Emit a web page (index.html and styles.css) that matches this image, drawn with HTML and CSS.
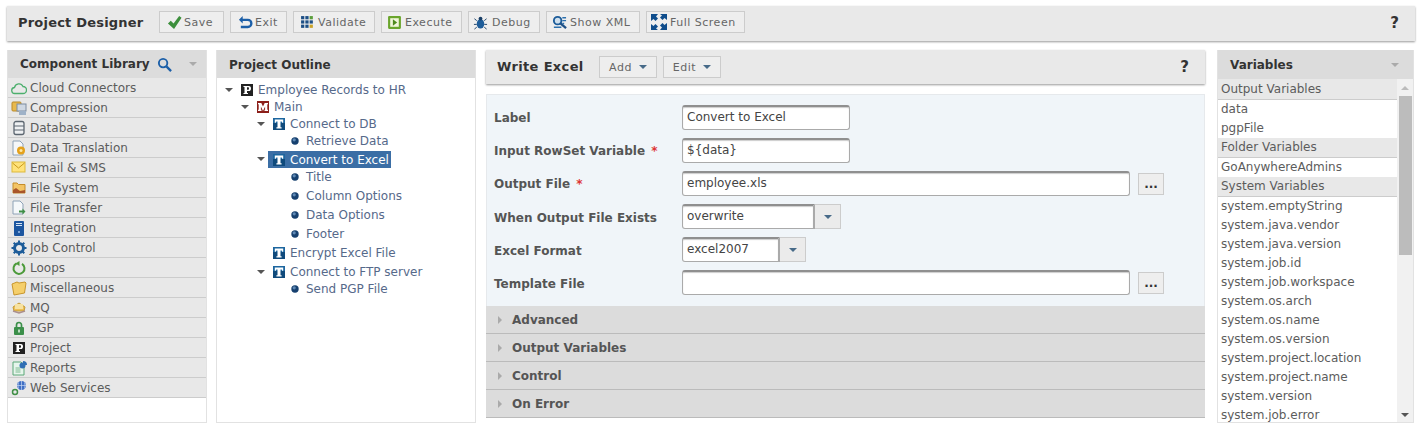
FILE: index.html
```html
<!DOCTYPE html>
<html lang="en">
<head>
<meta charset="utf-8">
<title>Project Designer</title>
<link rel="stylesheet" href="styles.css">
</head>
<body>
<svg class="defs" width="0" height="0">
  <defs>
    <symbol id="i-t" viewBox="0 0 12 12"><rect width="12" height="12" fill="#0f4a7c"/><rect width="12" height="5" fill="#1d669f"/><path d="M1.800 1.500h8.400v3.200H9.200l-.5-1.200H7.500v5.700h1.100v1.300H3.400V9.200h1.100V3.500H3.300l-.5 1.200h-1z" fill="#fff"/></symbol>
    <symbol id="i-m" viewBox="0 0 12 12"><rect width="12" height="12" fill="#8c1f1a"/><path d="M1 2h3.300L6 5.500 7.700 2H11v1.200h-.7v5.600h.7V10H7.500V8.800h.6V5.500L6 10 3.900 5.500v3.300h.6V10H1V8.800h.7V3.200H1z" fill="#fff"/></symbol>
    <symbol id="i-p" viewBox="0 0 12 12"><rect width="12" height="12" fill="#222"/><path d="M2.500 2h5.300C9.500 2 10 3 10 4.400S9.400 7 7.800 7H6v2h1v1H2.500V9H3.500V3H2.500zM6 3.200v2.600h1c.7 0 1-.5 1-1.300s-.3-1.300-1-1.300z" fill="#fff"/></symbol>
    <symbol id="i-dot" viewBox="0 0 8 8"><circle cx="4" cy="4" r="3.700" fill="#16406f"/><circle cx="3.200" cy="2.800" r="1.600" fill="#5f89b5"/></symbol>
  </defs>
</svg>

<header class="topbar">
  <h1 class="title">Project Designer</h1>
  <nav class="tools">
    <button class="tool tool-save"><svg class="ti" viewBox="0 0 16 16"><path d="M1 9l3-3 3 3 6-8 2.500 2L7.500 15z" fill="#3c8f3c"/></svg>Save</button>
    <button class="tool tool-exit"><svg class="ti" viewBox="0 0 16 16"><path d="M5 1L1 5l4 4V6.500h5.500a2.500 2.500 0 010 5H3V14h7.500a5 5 0 000-10H5z" fill="#1c5fa8"/></svg>Exit</button>
    <button class="tool tool-validate"><svg class="ti" viewBox="0 0 14 14"><g fill="#1d4f85"><rect x="1" y="1" width="3" height="3"/><rect x="5" y="1" width="3" height="3"/><rect x="1" y="5" width="3" height="3"/><rect x="5" y="5" width="3" height="3"/><rect x="1" y="9" width="3" height="3"/><rect x="5" y="9" width="3" height="3"/><rect x="9" y="5" width="3" height="3"/></g><rect x="9" y="1" width="3" height="3" fill="#5a9e3c"/><rect x="9" y="9" width="3" height="3" fill="#c9a227"/></svg>Validate</button>
    <button class="tool tool-exec"><svg class="ti" viewBox="0 0 14 14"><rect x="1" y="1" width="12" height="12" rx="1" fill="#6aa52c"/><rect x="3" y="3" width="8" height="8" fill="#f1f6dc"/><path d="M5.500 4l4 3-4 3z" fill="#4e8a1d"/></svg>Execute</button>
    <button class="tool tool-debug"><svg class="ti" viewBox="0 0 16 16"><ellipse cx="8" cy="9.500" rx="4" ry="5" fill="#1d5c99"/><circle cx="8" cy="3.800" r="2" fill="#183e66"/><path d="M4 6L1.500 4M4 10H1M4 13l-2.500 2M12 6l2.500-2M12 10h3M12 13l2.500 2" stroke="#183e66" fill="none"/></svg>Debug</button>
    <button class="tool tool-xml"><svg class="ti" viewBox="0 0 16 16"><circle cx="6" cy="6" r="4" fill="#cfe0ee" stroke="#1d5c99" stroke-width="2"/><path d="M9 9l6 5" stroke="#1d4f85" stroke-width="2.500"/><path d="M11 3h4M11 6h4M11 9h2M2 13h8" stroke="#2d70ad" stroke-width="1.500"/></svg>Show XML</button>
    <button class="tool tool-full"><svg class="ti ti-l" viewBox="0 0 18 18"><g fill="#0f4d8c"><path d="M1 1h7L6 3.500 8 5.500 5.500 8 3.500 6 1 8z"/><path d="M17 1v6l-2.500-2L12.500 7 10 4.500 12 2.500 10 1z"/><path d="M1 17v-6l2.500 2 2-2L8 13.500 6 15.500 8 17z"/><path d="M17 17h-7l2-2.500-2-2L12.500 10l2 2 2.500-2z"/></g></svg>Full Screen</button>
  </nav>
  <span class="help">?</span>
</header>

<main class="columns">
  <section class="panel library">
    <div class="panel-head">
      <h2 class="panel-title">Component Library</h2>
      <svg class="search" viewBox="0 0 16 16"><circle cx="6.500" cy="6.500" r="4.500" fill="none" stroke="#1c5fa8" stroke-width="2"/><path d="M10 10l5 5" stroke="#1c5fa8" stroke-width="2.500"/></svg>
      <span class="caret caret-head"></span>
    </div>
    <ul class="lib-list">
      <li class="lib-item"><svg class="li" viewBox="0 0 16 16"><path d="M4 13.500a3 3 0 01-.5-6A4.500 4.500 0 0112 6.500a3.500 3.500 0 010 7z" fill="none" stroke="#4caf6d" stroke-width="1.300"/></svg>Cloud Connectors</li>
      <li class="lib-item"><svg class="li" viewBox="0 0 16 16"><rect x="1" y="2" width="9" height="9" rx="1" fill="#e8b94e" stroke="#b98a2a"/><rect x="6" y="4" width="9" height="7" fill="#cfd8e3" stroke="#7c8ca0"/><rect x="8" y="11" width="7" height="4" fill="#9fb2c8"/></svg>Compression</li>
      <li class="lib-item"><svg class="li" viewBox="0 0 16 16"><rect x="3" y="1.500" width="10" height="13" rx="2" fill="#eef0f2" stroke="#5c6670" stroke-width="1.300"/><path d="M3 6h10M3 10h10" stroke="#5c6670"/></svg>Database</li>
      <li class="lib-item"><svg class="li" viewBox="0 0 16 16"><path d="M2 1h7l3 3v11H2z" fill="#f5f7f9" stroke="#8ea2b6"/><circle cx="10" cy="10.500" r="4" fill="#e4a11b"/><circle cx="10" cy="10.500" r="1.500" fill="#fbe7a8"/></svg>Data Translation</li>
      <li class="lib-item"><svg class="li" viewBox="0 0 16 16"><rect x="1" y="2" width="13" height="10" fill="#ffe27a" stroke="#dcb93c"/><path d="M1.500 3L7.500 8l6-5" fill="none" stroke="#c99a1d"/></svg>Email &amp; SMS</li>
      <li class="lib-item"><svg class="li" viewBox="0 0 16 16"><path d="M2 3h4l1.500 1.500H14V13H2z" fill="#f3c465" stroke="#c48c2b"/><path d="M2 10l3-2 4 3 5-1v3H2z" fill="#a9552a"/></svg>File System</li>
      <li class="lib-item"><svg class="li" viewBox="0 0 16 16"><path d="M2 1h7l3 3v10H2z" fill="#f5f8fa" stroke="#8ea2b6"/><path d="M8 10.500h3.500V8.500l3 3-3 3v-2H8z" fill="#3f8f46"/></svg>File Transfer</li>
      <li class="lib-item"><svg class="li" viewBox="0 0 16 16"><rect x="3" y="1" width="10" height="15" rx="1" fill="#1c56a0"/><path d="M5 3.500h6M5 5.500h6" stroke="#d5e4f5"/><circle cx="8" cy="12" r="1" fill="#9cc0ea"/></svg>Integration</li>
      <li class="lib-item"><svg class="li" viewBox="0 0 16 16"><circle cx="8" cy="8" r="4.500" fill="none" stroke="#1d5c99" stroke-width="3"/><path d="M8 .500v15M.500 8h15M2.700 2.700l10.600 10.600M13.300 2.700L2.700 13.300" stroke="#1d5c99" stroke-width="2" stroke-dasharray="2.500 10 2.500"/></svg>Job Control</li>
      <li class="lib-item"><svg class="li" viewBox="0 0 16 16"><path d="M5.500 3.500a5.500 5.500 0 105.500.3" fill="none" stroke="#4b9a3a" stroke-width="2"/><path d="M7.500 1v5L3.500 3.500z" fill="#4b9a3a" transform="translate(1 0)"/></svg>Loops</li>
      <li class="lib-item"><svg class="li" viewBox="0 0 16 16"><path d="M1 4l5-2 2 1 6-1 1 1-1.500 10L3 15z" fill="#f5cf6b" stroke="#c9962b"/></svg>Miscellaneous</li>
      <li class="lib-item"><svg class="li" viewBox="0 0 16 16"><path d="M2 7l6-4 6 4-1 4H3z" fill="#eec057" stroke="#c49a35"/><path d="M4 4h8v5H4z" fill="#f7e2a0"/><path d="M2 11l6 2 6-2" fill="none" stroke="#aa8f8f" stroke-width="1.500"/></svg>MQ</li>
      <li class="lib-item"><svg class="li" viewBox="0 0 16 16"><path d="M5.500 7V5a2.500 2.500 0 015 0v2" fill="none" stroke="#3b8f4a" stroke-width="1.700"/><rect x="3" y="7" width="10" height="8" rx="1" fill="#3b8f4a"/><rect x="7.200" y="9.500" width="1.600" height="3" fill="#dff0e0"/></svg>PGP</li>
      <li class="lib-item"><span class="li li-box"><svg class="node" viewBox="0 0 12 12"><use href="#i-p"/></svg></span>Project</li>
      <li class="lib-item"><svg class="li" viewBox="0 0 16 16"><path d="M2 2h8l3 3v10H2z" fill="#e7f5ec" stroke="#5aa878"/><path d="M4.500 8h5M4.500 10h5M4.500 12h5" stroke="#7dbb91"/><path d="M12 1v4h4a4 4 0 00-4-4z" fill="#2f6fb3"/><circle cx="11.500" cy="5.500" r="3" fill="#2f6fb3"/></svg>Reports</li>
      <li class="lib-item"><svg class="li" viewBox="0 0 16 16"><circle cx="10.500" cy="5.500" r="4.500" fill="#3f6fc4"/><path d="M6 5.500h9M10.500 1v9M7.500 2.500a8 8 0 000 6M13.500 2.500a8 8 0 010 6" stroke="#c6d7f2" fill="none" stroke-width=".7"/><circle cx="4" cy="12" r="2.500" fill="none" stroke="#3f8f46" stroke-width="1.500"/></svg>Web Services</li>
    </ul>
  </section>

  <section class="panel outline">
    <div class="panel-head outline-head">
      <h2 class="panel-title">Project Outline</h2>
    </div>
    <ul class="tree">
      <li class="row h17 lv0"><span class="tw open"></span><svg class="node" viewBox="0 0 12 12"><use href="#i-p"/></svg><span class="lbl">Employee Records to HR</span></li>
      <li class="row h17 lv1"><span class="tw open"></span><svg class="node" viewBox="0 0 12 12"><use href="#i-m"/></svg><span class="lbl">Main</span></li>
      <li class="row h17 lv2"><span class="tw open"></span><svg class="node" viewBox="0 0 12 12"><use href="#i-t"/></svg><span class="lbl">Connect to DB</span></li>
      <li class="row h18 lv3"><svg class="dot" viewBox="0 0 8 8"><use href="#i-dot"/></svg><span class="lbl">Retrieve Data</span></li>
      <li class="row h18 lv2"><span class="tw open"></span><span class="sel"><svg class="node" viewBox="0 0 12 12"><use href="#i-t"/></svg><span class="lbl lbl-sel">Convert to Excel</span></span></li>
      <li class="row h18 lv3"><svg class="dot" viewBox="0 0 8 8"><use href="#i-dot"/></svg><span class="lbl">Title</span></li>
      <li class="row h19 lv3"><svg class="dot" viewBox="0 0 8 8"><use href="#i-dot"/></svg><span class="lbl">Column Options</span></li>
      <li class="row h19 lv3"><svg class="dot" viewBox="0 0 8 8"><use href="#i-dot"/></svg><span class="lbl">Data Options</span></li>
      <li class="row h19 lv3"><svg class="dot" viewBox="0 0 8 8"><use href="#i-dot"/></svg><span class="lbl">Footer</span></li>
      <li class="row h19 lv2"><span class="tw"></span><svg class="node" viewBox="0 0 12 12"><use href="#i-t"/></svg><span class="lbl">Encrypt Excel File</span></li>
      <li class="row h19 lv2"><span class="tw open"></span><svg class="node" viewBox="0 0 12 12"><use href="#i-t"/></svg><span class="lbl">Connect to FTP server</span></li>
      <li class="row h16 lv3"><svg class="dot" viewBox="0 0 8 8"><use href="#i-dot"/></svg><span class="lbl">Send PGP File</span></li>
    </ul>
  </section>

  <section class="editor">
    <div class="editor-head">
      <h2 class="editor-title">Write Excel</h2>
      <button class="tool menu-btn">Add<span class="caret"></span></button>
      <button class="tool menu-btn">Edit<span class="caret"></span></button>
      <span class="help">?</span>
    </div>
    <form class="form">
      <div class="field">
        <label class="flabel">Label</label>
        <input class="input w-s" value="Convert to Excel">
      </div>
      <div class="field">
        <label class="flabel">Input RowSet Variable <b class="req">*</b></label>
        <input class="input w-s" value="${data}">
      </div>
      <div class="field">
        <label class="flabel">Output File <b class="req">*</b></label>
        <input class="input w-l" value="employee.xls">
        <button type="button" class="dots">...</button>
      </div>
      <div class="field">
        <label class="flabel">When Output File Exists</label>
        <input class="input w-c1 combo" value="overwrite"><span class="combo-btn"><span class="caret"></span></span>
      </div>
      <div class="field">
        <label class="flabel">Excel Format</label>
        <input class="input w-c2 combo" value="excel2007"><span class="combo-btn"><span class="caret"></span></span>
      </div>
      <div class="field">
        <label class="flabel">Template File</label>
        <input class="input w-l" value="">
        <button type="button" class="dots">...</button>
      </div>
    </form>
    <div class="acc"><span class="acc-arrow"></span>Advanced</div>
    <div class="acc"><span class="acc-arrow"></span>Output Variables</div>
    <div class="acc"><span class="acc-arrow"></span>Control</div>
    <div class="acc"><span class="acc-arrow"></span>On Error</div>
  </section>

  <section class="panel vars">
    <div class="panel-head vars-head">
      <h2 class="panel-title">Variables</h2>
      <span class="caret caret-head"></span>
    </div>
    <div class="vars-body">
      <div class="vars-list">
        <div class="vgroup">Output Variables</div>
        <div class="vitem">data</div>
        <div class="vitem">pgpFile</div>
        <div class="vgroup">Folder Variables</div>
        <div class="vitem">GoAnywhereAdmins</div>
        <div class="vgroup">System Variables</div>
        <div class="vitem">system.emptyString</div>
        <div class="vitem">system.java.vendor</div>
        <div class="vitem">system.java.version</div>
        <div class="vitem">system.job.id</div>
        <div class="vitem">system.job.workspace</div>
        <div class="vitem">system.os.arch</div>
        <div class="vitem">system.os.name</div>
        <div class="vitem">system.os.version</div>
        <div class="vitem">system.project.location</div>
        <div class="vitem">system.project.name</div>
        <div class="vitem">system.version</div>
        <div class="vitem">system.job.error</div>
      </div>
      <div class="sbar">
        <span class="sb-up"></span>
        <span class="sb-thumb"></span>
        <span class="sb-down"></span>
      </div>
    </div>
  </section>
</main>
</body>
</html>
```

FILE: styles.css
```css
* { box-sizing: border-box; }
html, body { margin: 0; height: 428px; overflow: hidden; background: #fff; }
body { padding: 6px 7px 0; font-family: "DejaVu Sans", Verdana, sans-serif; font-size: 12px; color: #5c5c5c; }
.defs { position: absolute; }
ul { list-style: none; margin: 0; padding: 0; }
h1, h2 { margin: 0; }

.topbar { display: flex; align-items: center; height: 35px; width: 1408px; background: #e9e9e9; box-shadow: 0 1px 2px #999; padding: 0 16px 2px 11px; }
.title { font-size: 13px; font-weight: bold; color: #333; width: 141px; letter-spacing: .2px; }
.tools { display: flex; gap: 6px; flex: 1; align-self: flex-start; margin-top: 5px; }
.tool { display: inline-flex; align-items: center; height: 22px; background: #eee; border: 1px solid #ccc; padding: 0; font: 11px "DejaVu Sans", Verdana, sans-serif; letter-spacing: .5px; color: #666; }
.ti { width: 15px; height: 15px; flex: none; }
.tool-save { width: 65px; }
.tool-save .ti { margin: 0 2px 0 7px; }
.tool-exit { width: 57px; }
.tool-exit .ti { margin: 0 2px 0 7px; }
.tool-validate { width: 82px; }
.tool-validate .ti { margin: 0 3px 0 6px; }
.tool-exec { width: 81px; }
.tool-exec .ti { margin: 0 3px 0 5px; }
.tool-debug { width: 72px; }
.tool-debug .ti { margin: 0 4px 0 4px; }
.tool-xml { width: 94px; }
.tool-xml .ti { margin: 0 3px 0 5px; }
.tool-full { width: 99px; }
.tool-full .ti-l { width: 18px; height: 18px; margin: 0 2px 0 3px; }
.help { font-size: 15px; font-weight: bold; color: #333; }

.columns { display: flex; align-items: flex-start; margin-top: 9px; }
.panel { height: 373px; border: 1px solid #e2e2e2; border-top: 0; background: #fff; display: flex; flex-direction: column; }
.library { width: 200px; margin-right: 9px; }
.outline { width: 260px; margin-right: 10px; }
.panel-head { display: flex; align-items: center; height: 28px; background: #dcdcdc; padding: 0 0 0 12px; flex: none; }
.outline-head { padding-top: 2px; }
.panel-title { font-size: 12px; font-weight: bold; color: #333; }
.search { width: 15px; height: 15px; margin-left: 7px; }
.caret { display: inline-block; width: 0; height: 0; border: 4px solid transparent; border-top-color: #476a88; border-bottom: 0; margin-left: 7px; }
.caret-head { border-top-color: #aaa; margin-left: auto; margin-right: 9px; }

.lib-item { display: flex; align-items: center; height: 20px; background: #e8e8e8; border-bottom: 1px solid #ccc; color: #5c5c5c; font-size: 12px; }
.li { width: 16px; height: 16px; margin: 0 3px; flex: none; }
.li-box { display: flex; align-items: center; justify-content: center; }
.li-box .node { margin: 0; }

.tree { padding: 3px 0 0; }
.row { display: flex; align-items: center; }
.h16 { height: 16px; }
.h17 { height: 17px; }
.h18 { height: 18px; }
.h19 { height: 19px; }
.lv0 { padding-left: 8px; }
.lv1 { padding-left: 24px; }
.lv2 { padding-left: 40px; }
.lv3 { padding-left: 74px; }
.tw { width: 8px; height: 0; margin-right: 8px; flex: none; }
.tw.open { border: 4px solid transparent; border-top: 4px solid #555; border-bottom: 0; }
.node { width: 12px; height: 12px; margin-right: 5px; flex: none; }
.dot { width: 8px; height: 8px; margin-right: 7px; flex: none; }
.lbl { color: #56698a; white-space: nowrap; }
.sel { display: flex; align-items: center; height: 17px; background: #3b6ea5; padding: 1px 2px 0 5px; margin-left: -5px; }
.lbl-sel { color: #fff; }

.editor { width: 719px; margin-right: 12px; }
.editor-head { display: flex; align-items: center; height: 34px; background: #e9e9e9; box-shadow: 0 1px 2px #999; padding: 0 16px 0 11px; }
.editor-title { font-size: 13px; font-weight: bold; color: #333; width: 102px; letter-spacing: .35px; padding-bottom: 1px; }
.menu-btn { width: 58px; justify-content: center; margin-right: 6px; }
.editor-head .help { margin-left: auto; }
.form { margin-top: 10px; height: 212px; padding: 10px 0 0 7px; background: #f0f5f9; border: 1px solid #e6e9ec; border-bottom: 0; }
.field { display: flex; align-items: center; height: 25px; margin-bottom: 8px; }
.field:nth-child(n+4) .flabel { padding-top: 2px; }
.flabel { width: 188px; font-weight: bold; font-size: 12px; color: #555; flex: none; }
.req { color: #d33; margin-left: 2px; }
.input { height: 25px; padding: 0 4px 2px; font: 12px "DejaVu Sans", Verdana, sans-serif; color: #444; background: #fff; border: 1px solid #aaa; border-top: 2px solid #8f8f8f; border-radius: 3px; outline: 0; box-shadow: inset 0 1px 1px #ccc; }
.w-s { width: 168px; }
.w-l { width: 448px; }
.w-c1 { width: 133px; }
.w-c2 { width: 98px; }
.combo { border-radius: 3px 0 0 3px; border-right: 2px solid #aaa; }
.combo-btn { display: flex; align-items: center; justify-content: center; width: 26px; height: 25px; background: #ebebeb; border: 1px solid #ccc; border-left: 0; }
.combo-btn .caret { margin: 0; }
.dots { width: 26px; height: 22px; margin-left: 8px; padding: 0; font: bold 12px "DejaVu Sans", sans-serif; background: #eee; border: 1px solid #ccc; color: #333; }
.acc { display: flex; align-items: center; height: 28px; background: #dcdcdc; border-bottom: 1px solid #bbb; font-size: 12px; font-weight: bold; color: #555; padding-left: 12px; }
.acc-arrow { width: 0; height: 0; border: 4px solid transparent; border-left-color: #aaa; border-right: 0; margin-right: 10px; }

.vars { width: 197px; height: 373px; }
.vars-head { height: 29px; }
.vars-head .caret-head { margin-right: 14px; }
.vars-body { display: flex; flex: 1; min-height: 0; overflow: hidden; }
.vars-list { flex: 1; min-width: 0; overflow: hidden; }
.vgroup { height: 20px; line-height: 19px; background: #e8e8e8; border-bottom: 1px solid #ccc; padding-left: 3px; color: #5c5c5c; }
.vgroup:first-child { height: 21px; padding-top: 1px; }
.vitem { height: 19px; line-height: 19px; padding-left: 3px; color: #5c5c5c; white-space: nowrap; }
.sbar { width: 16px; flex: none; background: #f1f1f1; display: flex; flex-direction: column; align-items: center; }
.sb-up { width: 0; height: 0; border: 4px solid transparent; border-bottom-color: #bbb; border-top: 0; margin: 7px 0 6px; }
.sb-thumb { width: 13px; height: 159px; background: #bcbcbc; }
.sb-down { width: 0; height: 0; border: 4px solid transparent; border-top-color: #555; border-bottom: 0; margin-top: auto; margin-bottom: 5px; }
```
